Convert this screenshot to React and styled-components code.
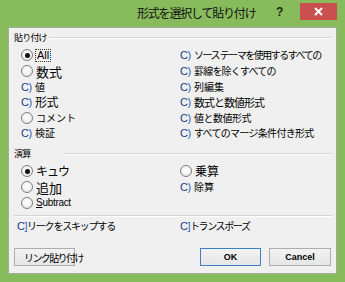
import React from "react";
import styled, { createGlobalStyle } from "styled-components";

const GlobalStyle = createGlobalStyle`
  html, body { margin: 0; padding: 0; background: #88bb5b; }
  body { font-family: "Noto Sans CJK JP", "Noto Sans", sans-serif; }
`;

const Window = styled.div`
  width: 345px;
  height: 282px;
  background: #88bb5b;
  display: flex;
  flex-direction: column;
  box-sizing: border-box;
  overflow: hidden;
`;

const TitleBar = styled.div`
  height: 27px;
  display: flex;
  align-items: flex-start;
  flex: none;
`;

const Title = styled.div`
  margin-left: 137px;
  margin-top: 6px;
  font-family: "Noto Sans CJK JP", sans-serif;
  font-size: 12px;
  line-height: 14px;
  letter-spacing: -1.2px;
  color: #111;
  white-space: nowrap;
`;

const HelpButton = styled.div`
  margin-left: auto;
  margin-top: 5px;
  width: 12px;
  font-family: "Liberation Sans", Arial, sans-serif;
  font-weight: bold;
  font-size: 12px;
  line-height: 14px;
  color: #1c2a14;
`;

const CloseButton = styled.div`
  margin: 3px 8px 0 12px;
  width: 37px;
  height: 17px;
  background: #c9504f;
  color: #fff;
  display: flex;
  align-items: center;
  justify-content: center;
`;

const Client = styled.div`
  flex: 1;
  margin: 0 8px 8px 8px;
  background: #f0f0f0;
  border: 1px solid #a4aba0;
  padding: 4px 4px 0 5px;
  display: flex;
  flex-direction: column;
`;

const GroupHeader = styled.div`
  height: 12px;
  display: flex;
  align-items: center;
  margin-top: ${(p) => p.$top || 0}px;
  &::after {
    content: "";
    flex: 1;
    margin-left: ${(p) => p.$gap || 2}px;
    border-top: 1px solid #d5d5d5;
    border-bottom: 1px solid #ffffff;
  }
`;

const GroupLabel = styled.span`
  font-size: 9px;
  line-height: 12px;
  letter-spacing: -0.8px;
  color: #000;
  white-space: nowrap;
`;

const OptionGrid = styled.div`
  display: grid;
  grid-template-columns: ${(p) => p.$left}px 1fr;
  grid-template-rows: ${(p) => p.$rows};
  grid-auto-flow: column;
  margin-top: ${(p) => p.$top}px;
  margin-left: ${(p) => p.$indent}px;
`;

const Option = styled.div`
  display: flex;
  align-items: center;
  white-space: nowrap;
`;

const RadioCircle = styled.span`
  width: 10px;
  height: 10px;
  border-radius: 50%;
  border: 1px solid #7d7d7d;
  background: radial-gradient(circle at 50% 40%, #ffffff 0%, #f0f0f0 60%, #d9d9d9 100%);
  display: flex;
  align-items: center;
  justify-content: center;
  margin-right: 3px;
  flex: none;
  &::after {
    content: "";
    width: 5px;
    height: 5px;
    border-radius: 50%;
    background: ${(p) => (p.$checked ? "#111" : "transparent")};
  }
`;

const Glyph = styled.span`
  width: 14px;
  flex: none;
  font-family: "Liberation Sans", Arial, sans-serif;
  font-size: 11px;
  line-height: 12px;
  color: #1b3a8c;
  letter-spacing: -0.5px;
  & b {
    font-weight: normal;
    color: #2a5fb8;
  }
`;

const Label = styled.span`
  font-family: ${(p) =>
    p.$latin ? '"Liberation Sans", Arial, sans-serif' : '"Noto Sans CJK JP", sans-serif'};
  font-size: ${(p) => p.$size || 10}px;
  line-height: 1;
  letter-spacing: ${(p) => (p.$ls !== undefined ? p.$ls : -0.6)}px;
  color: #000;
`;

const FocusLabel = styled(Label)`
  outline: 1px dotted #333;
  outline-offset: 0px;
  padding: 0 1px;
`;

const Underline = styled.span`
  text-decoration: underline;
`;

const Separator = styled.div`
  margin-top: ${(p) => p.$top}px;
  border-top: 1px solid #d5d5d5;
  border-bottom: 1px solid #ffffff;
`;

const CheckRow = styled.div`
  display: grid;
  grid-template-columns: 163px 1fr;
  height: 14px;
  margin-top: 2px;
  margin-left: 3px;
  align-items: center;
`;

const ButtonRow = styled.div`
  display: flex;
  align-items: center;
  margin-top: 15px;
  padding-right: 1px;
`;

const RightButtons = styled.div`
  margin-left: auto;
  display: flex;
  gap: 8px;
`;

const Button = styled.div`
  box-sizing: border-box;
  width: ${(p) => p.$w}px;
  height: 18px;
  border: 1px solid ${(p) => (p.$primary ? "#3d7fc4" : "#adadad")};
  background: linear-gradient(#f2f2f2, #e6e6e6);
  display: flex;
  align-items: center;
  justify-content: ${(p) => (p.$left ? "flex-start" : "center")};
  padding-left: ${(p) => (p.$left ? 9 : 0)}px;
  white-space: nowrap;
  overflow: visible;
  font-family: ${(p) =>
    p.$left ? '"Noto Sans CJK JP", sans-serif' : '"Liberation Sans", Arial, sans-serif'};
  font-size: ${(p) => (p.$left ? 10 : 9)}px;
  font-weight: ${(p) => (p.$left ? "normal" : "bold")};
  letter-spacing: ${(p) => (p.$left ? -1.6 : 0)}px;
  color: #000;
`;

const Broken = ({ bracket }) => (
  <Glyph>
    C<b>{bracket || ")"}</b>
  </Glyph>
);

const Item = ({ kind, checked, children, size, ls }) => (
  <Option>
    {kind === "radio" ? <RadioCircle $checked={checked} /> : <Broken />}
    <Label $size={size} $ls={ls}>
      {children}
    </Label>
  </Option>
);

export default function App() {
  return (
    <>
      <GlobalStyle />
      <Window>
        <TitleBar>
          <Title>形式を選択して貼り付け</Title>
          <HelpButton>?</HelpButton>
          <CloseButton>
            <svg width="9" height="9" viewBox="0 0 9 9">
              <path d="M1 1 L8 8 M8 1 L1 8" stroke="#fff" strokeWidth="2" />
            </svg>
          </CloseButton>
        </TitleBar>
        <Client>
          <GroupHeader>
            <GroupLabel>貼り付け</GroupLabel>
          </GroupHeader>
          <OptionGrid $left={159} $rows="16px 16px 15px 16px 15px 15px" $top={3} $indent={7}>
            <Option>
              <RadioCircle $checked />
              <FocusLabel $latin $size={11} $ls={0}>
                All
              </FocusLabel>
            </Option>
            <Item kind="radio" size={13} ls={0}>
              数式
            </Item>
            <Item>値</Item>
            <Item size={12} ls={-0.5}>
              形式
            </Item>
            <Item kind="radio" ls={0}>
              コメント
            </Item>
            <Item ls={0}>検証</Item>
            <Item ls={-1.5}>ソース テーマを使用するすべての</Item>
            <Item ls={-0.8}>罫線を除くすべての</Item>
            <Item ls={0}>列編集</Item>
            <Item size={11} ls={-1}>
              数式と数値形式
            </Item>
            <Item ls={-0.5}>値と数値形式</Item>
            <Item ls={-0.7}>すべてのマージ条件付き形式</Item>
          </OptionGrid>

          <GroupHeader $top={8} $gap={33}>
            <GroupLabel>演算</GroupLabel>
          </GroupHeader>
          <OptionGrid $left={159} $rows="16px 16px 15px" $top={3} $indent={7}>
            <Item kind="radio" checked size={12} ls={-1}>
              キュウ
            </Item>
            <Item kind="radio" size={13} ls={0}>
              追加
            </Item>
            <Option>
              <RadioCircle />
              <Label $latin $size={10} $ls={-0.3}>
                <Underline>S</Underline>ubtract
              </Label>
            </Option>
            <Item kind="radio" size={12} ls={0}>
              乗算
            </Item>
            <Item ls={0}>除算</Item>
          </OptionGrid>

          <Separator $top={5} />
          <CheckRow>
            <Option>
              <Glyph style={{ width: 10 }}>
                C<b>]</b>
              </Glyph>
              <Label $ls={-1.2}>リークをスキップする</Label>
            </Option>
            <Option>
              <Glyph style={{ width: 10 }}>
                C<b>]</b>
              </Glyph>
              <Label $ls={-1.4}>トランスポーズ</Label>
            </Option>
          </CheckRow>

          <ButtonRow>
            <Button $w={61} $left>
              リンク貼り付け
            </Button>
            <RightButtons>
              <Button $w={61} $primary>
                OK
              </Button>
              <Button $w={62}>Cancel</Button>
            </RightButtons>
          </ButtonRow>
        </Client>
      </Window>
    </>
  );
}
